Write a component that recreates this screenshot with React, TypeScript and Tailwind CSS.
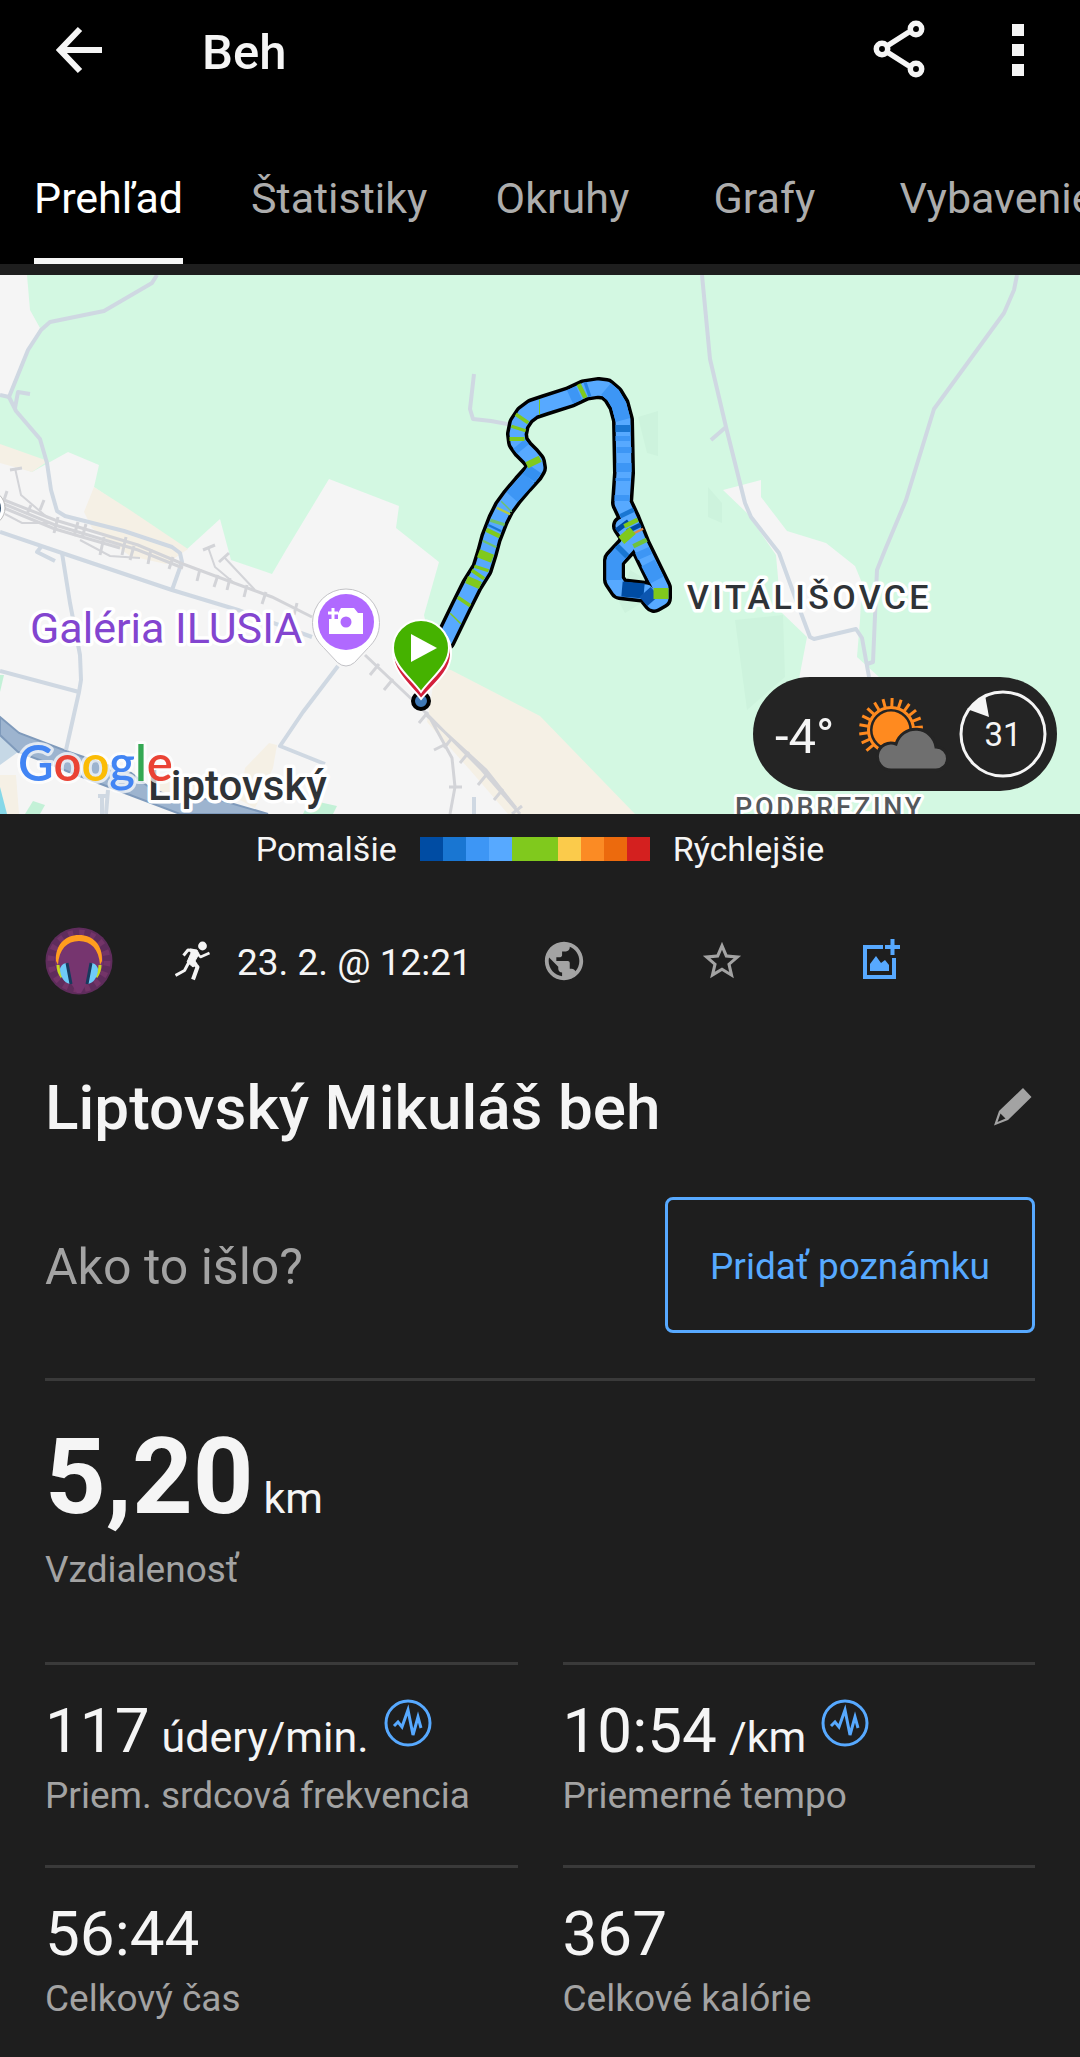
import { useState } from 'react';
import type { ReactNode } from 'react';
import { clsx } from 'clsx';
import { MdPublic, MdStarBorder } from 'react-icons/md';

const TABS = ['Prehľad', 'Štatistiky', 'Okruhy', 'Grafy', 'Vybavenie'] as const;

const PACE_COLORS = [
  'bg-[#004ca3]',
  'bg-[#1976d2]',
  'bg-[#3d96f5]',
  'bg-[#57a9ff]',
  'bg-[#80c91d]',
  'bg-[#80c91d]',
  'bg-[#fbcb4b]',
  'bg-[#fb8b24]',
  'bg-[#ec6a0d]',
  'bg-[#d4201f]',
];

interface Stat {
  value: string;
  unit?: string;
  label: string;
  chart?: boolean;
}

const STATS: Stat[] = [
  { value: '117', unit: 'údery/min.', label: 'Priem. srdcová frekvencia', chart: true },
  { value: '10:54', unit: '/km', label: 'Priemerné tempo', chart: true },
  { value: '56:44', label: 'Celkový čas' },
  { value: '367', label: 'Celkové kalórie' },
];

const ROUTE =
  'M445 640 L461 607 L472 585 L482 569 L487 553 L491 538 L498 520 L504 508 L512 497 L523 484 L533 473 L536 468 L535 462 L530 456 L523 449 L518 442 L517 434 L519 424 L525 415 L533 409 L545 405 L570 397 L585 390 L598 388 L606 389 L613 395 L619 405 L623 420 L624 473 L622 503 L630 520 L640 545 L661 588 L661 598 L654 602 L646 592 L620 589 L614 580 L614 560 L627 546 L631 538 L623 526';

// Stretches of the route whose pace differs from the base colour.
const PACE_SEGMENTS = [
  { d: 'M512 497 L529 478', color: '#3d96f5' },
  { d: 'M529 478 L535 469', color: '#3590f0' },
  { d: 'M523 449 L519 444', color: '#3d96f5' },
  { d: 'M570 397 L579 393', color: '#3d96f5' },
  { d: 'M586 390 L589 389', color: '#2a84e4' },
  { d: 'M606 389 L613 395 L619 405 L623 420', color: '#3d96f5' },
  { d: 'M623 425 V432', color: '#1976d2' },
  { d: 'M623 436 V441', color: '#3d96f5' },
  { d: 'M624 447 V453', color: '#3d96f5' },
  { d: 'M624 463 V472', color: '#3d96f5' },
  { d: 'M623 478 V481', color: '#3d96f5' },
  { d: 'M622 495 V501', color: '#3d96f5' },
  { d: 'M626 511 L628 515', color: '#1976d2' },
  { d: 'M642 550 L645 557', color: '#3d96f5' },
  { d: 'M648 563 L657 580', color: '#3d96f5' },
  { d: 'M622 551 L614 561 V580', color: '#3d96f5' },
  { d: 'M624 549 L620 553', color: '#1976d2' },
  { d: 'M622 589 L644 591', color: '#004ca3' },
  { d: 'M645 592 L653 601', color: '#0c56b0' },
  { d: 'M621 524 L624 528', color: '#004ca3' },
  { d: 'M633 526 L635 530', color: '#004ca3' },
  { d: 'M636 531 L637 533', color: '#e0884a' },
  { d: 'M630 521 L632 525', color: '#80c91d' },
  { d: 'M624 532 L630 539', color: '#80c91d' },
  { d: 'M639 541 L641 545', color: '#6fc23c' },
  { d: 'M661 588 V599', color: '#80c91d' },
  { d: 'M580 392 L584 390', color: '#80c91d' },
  { d: 'M539 407 L540 407', color: '#80c91d' },
  { d: 'M521 420 L523 417', color: '#80c91d' },
  { d: 'M518 430 L519 427', color: '#80c91d' },
  { d: 'M517 441 V437', color: '#80c91d' },
  { d: 'M535 465 L532 459', color: '#80c91d' },
  { d: 'M506 507 L507 506', color: '#6fc26b' },
  { d: 'M503 512 L504 510', color: '#b5cc3c' },
  { d: 'M497 524 L498 521', color: '#6fc26b' },
  { d: 'M494 529 L495 527', color: '#1976d2' },
  { d: 'M492 535 L494 531', color: '#80c91d' },
  { d: 'M489 545 L490 543', color: '#6fc26b' },
  { d: 'M484 560 L487 552', color: '#80c91d' },
  { d: 'M481 570 L482 567', color: '#80c91d' },
  { d: 'M477 576 L479 573', color: '#80c91d' },
  { d: 'M472 586 L475 579', color: '#80c91d' },
  { d: 'M463 603 L465 600', color: '#80c91d' },
  { d: 'M455 619 L456 618', color: '#80c91d' },
];

const SUN_RAYS = Array.from({ length: 16 }, (_, i) => -220 + i * 16.5).filter((a) => a < 0);

function BackIcon() {
  return (
    <svg className="h-12 w-12" viewBox="0 0 48 48" fill="none" stroke="currentColor" strokeWidth="6">
      <path d="M46 24H5M24 3L4 24l20 21" />
    </svg>
  );
}

function ShareIcon() {
  return (
    <svg className="h-15 w-13" viewBox="0 0 52 60" fill="none" stroke="currentColor" strokeWidth="5.5">
      <path d="M14 26l22-14M14 32l22 14" />
      <circle cx="9" cy="29" r="5.700" />
      <circle cx="43" cy="9" r="5.700" />
      <circle cx="43" cy="49" r="5.700" />
    </svg>
  );
}

function MoreIcon() {
  return (
    <svg className="h-13 w-3" viewBox="0 0 12 52" fill="currentColor">
      <path d="M0 0h12v12H0zM0 20h12v12H0zM0 40h12v12H0z" />
    </svg>
  );
}

function Avatar() {
  return (
    <svg className="h-[68px] w-[68px] shrink-0" viewBox="0 0 68 68" role="img" aria-label="Profil">
      <circle cx="34" cy="34" r="33.500" fill="#5f2c5c" />
      <circle cx="34" cy="34" r="28" fill="none" stroke="#733468" strokeWidth="7" strokeDasharray="5 6" />
      <circle cx="34" cy="34" r="24" fill="#76356f" />
      <path d="M24 53h20l-8 13h-4z" fill="#76356f" />
      <path d="M13 38c0 5 1 8 4 12M55 38c0 5-1 8-4 12" fill="none" stroke="#c6dc1f" strokeWidth="3" />
      <path d="M11 34C10 18 20 8 34 8s24 10 23 26l-2 4C54 22 46 14 34 14S14 22 13 38z" fill="#ff9d1e" />
      <path d="M15 42c1-4 4-6 7-6l3 21c-6-1-10-8-10-15zM53 42c-1-4-4-6-7-6l-3 21c6-1 10-8 10-15z" fill="#6fcbf8" />
      <path d="M22 36l4 21M46 36l-4 21" stroke="#173a5e" strokeWidth="3" />
    </svg>
  );
}

function RunnerIcon() {
  return (
    <svg className="h-10 w-9" viewBox="0 0 36 40" fill="none" stroke="currentColor" strokeLinejoin="round">
      <circle cx="27.5" cy="5" r="4.4" fill="currentColor" stroke="none" />
      <path d="M15 8L22 9L24 13L20 20L22 23L18 26L12 21L16 12z" fill="currentColor" strokeWidth="1" />
      <path d="M8.5 14.5L13 9L19 9.500" strokeWidth="3" />
      <path d="M21 11L25.500 16L34.500 12" strokeWidth="2.600" />
      <path d="M14 21L9.500 29.500L0.500 34.500" strokeWidth="3" />
      <path d="M19 22L22.500 26L18 38.500" strokeWidth="4" />
    </svg>
  );
}

function AddImageIcon() {
  return (
    <svg className="h-[46px] w-[46px]" viewBox="0 0 46 46" fill="none" stroke="currentColor" strokeWidth="4">
      <path d="M26 9H8v30h29V20M35.500 1v16M28 9h15" />
      <path d="M13 33v-7l6-8 5 7 4-3 4 5v6z" fill="currentColor" stroke="none" />
    </svg>
  );
}

function PencilIcon() {
  return (
    <svg className="h-10 w-10" viewBox="0 0 40 40" fill="currentColor">
      <path
        fillRule="evenodd"
        d="M30 0l8.500 9L15 32 1 37.500 6 23zM7.500 25.500L4.500 34l8-3.500z"
      />
    </svg>
  );
}

function PulseIcon() {
  return (
    <svg className="h-12 w-12" viewBox="0 0 48 48" fill="none" stroke="currentColor">
      <circle cx="24" cy="24" r="22" strokeWidth="3" />
      <path d="M10 27l4-4 4 5 6-17 5 25 5-18 3 11" strokeWidth="3" />
    </svg>
  );
}

function WeatherBadge() {
  return (
    <div className="absolute right-[23px] bottom-[23px] flex h-[114px] items-center rounded-full bg-[#242424] pr-[9px] pl-[22px]">
      <span className="w-[83px] pt-1.5 text-[49px]">-4°</span>
      <svg className="mr-[10px] h-[76px] w-[90px]" viewBox="858 697 90 76">
        <g stroke="#ff8a1f" strokeWidth="3">
          {SUN_RAYS.map((angle) => (
            <path key={angle} d="M914 731h9" transform={`rotate(${angle} 891 731)`} />
          ))}
          <circle cx="891" cy="731" r="22.500" fill="none" />
        </g>
        <circle cx="891" cy="731" r="18.500" fill="#ff8a1f" />
        <path
          d="M891 771a13.500 13.500 0 1 1 5-26a20.500 20.500 0 0 1 40 3a11.500 11.500 0 0 1 0 23z"
          fill="#6f6f6f"
          stroke="#242424"
          strokeWidth="3"
        />
      </svg>
      <div className="relative flex h-[90px] w-[90px] items-center justify-center pt-0.5 text-[33px]">
        <svg className="absolute inset-0" viewBox="0 0 90 90">
          <circle cx="45" cy="45" r="42" fill="none" stroke="#f5f5f5" strokeWidth="3" />
          <path d="M9 20L27 6l4 22z" fill="#f5f5f5" />
        </svg>
        31
      </div>
    </div>
  );
}

function RouteMap() {
  return (
    <section className="relative h-[539px] overflow-hidden" aria-label="Mapa trasy">
      <svg className="h-full w-full" viewBox="0 275 1080 539" preserveAspectRatio="xMidYMid slice">
        <path d="M0 275h1080v539H0z" fill="#d3f8e2" />

        {/* built-up land */}
        <g fill="#f5f5f5">
          <path d="M0 275H27L30 310L40 328L27 352L9 397L0 395z" />
          <path d="M0 460L32 472L68 452L99 465L94 487L186 550L220 519L231 560L272 574L286 550L329 479L399 506L396 528L439 562L424 615L436 670L520 814H0z" />
          <path d="M723 490L761 480V497L787 531L826 543L855 566L862 583L860 620L857 657L879 677L880 700H795L807 637L781 612L776 555L747 513z" />
        </g>
        <g fill="#cdf3dd">
          <path d="M735 620L783 615L785 677L747 710z" />
          <path d="M638 417L658 411V456L647 453z" />
          <path d="M708 487L722 503V523L708 517z" />
          <path d="M619 602L630 570L650 582L640 604L625 613z" />
        </g>
        <g fill="#f5f0e5">
          <path d="M0 444L48 461L32 472L0 463z" />
          <path d="M94 487L130 510L188 549L166 564L130 556L92 528L84 512z" />
          <path d="M436 668L451 670L540 716L635 814H508L470 770L427 722z" />
          <path d="M269 743L277 745L273 768L255 808L240 800L245 768z" />
          <path d="M0 775H16L19 814H0z" />
          <path d="M160 780h45l-5 12h-40z" />
        </g>
        <g fill="#c3f1d7">
          <path d="M0 675H4L0 692z" />
          <path d="M33 801L45 805L40 814H25z" />
          <path d="M310 800L337 806L333 814H303z" />
        </g>

        {/* water */}
        <path d="M0 733L12 740L18 752L0 765z" fill="#c6d8e6" />
        <path d="M0 787L7 814H0z" fill="#86d8e8" />
        <path
          d="M0 717L19 733L69 752L131 773L150 788L172 797L220 800L268 814H180L130 795L69 772L45 762L18 752L0 735z"
          fill="#9db4cf"
          stroke="#7f9abb"
          strokeWidth="2"
        />

        {/* roads */}
        <g fill="none" stroke="#cfd8e2" strokeWidth="4" strokeLinejoin="round">
          <path d="M157 275L152 283L104 311L50 322L41 330L28 350L9 397L16 411L40 439L47 463L51 490L57 511L65 516L124 531L172 547L180 553L182 562L172 590" />
          <path d="M0 395L9 397M15 408L18 392L30 394" />
          <path d="M0 532L62 553L172 590L238 610L312 637" />
          <path d="M41 547L37 552L55 561M62 553L70 603L80 655L81 680L79 692L66 750M0 671L79 692" />
          <path d="M338 666L303 712L280 746L325 764M474 797V814" />
          <path d="M474 374L470 409L473 419L491 421L513 425" />
          <path d="M108 790L106 814M102 796V814M98 796H108" />
          <path d="M702 275L710 359L726 427L745 503L751 517L779 553L795 597L810 637L814 639L856 629L862 638L869 677M726 427L711 440" />
          <path d="M1017 275L1014 290L1004 313L934 409L906 500L885 550L877 570L873 662L867 664" />
        </g>

        {/* railway */}
        <g fill="none" stroke="#d3d4d8" strokeWidth="2">
          <path d="M4 500L55 520L138 545L183 564L272 597L312 617M4 504L55 525L138 550L183 568M4 508L55 529L120 548" strokeWidth="3" />
          <path d="M15 468L21 495L48 518M208 547L215 567L234 583M224 557L255 590M5 514L22 523H50M80 540L110 556L140 558" />
          <path d="M365 655L420 707L482 770L520 814M425 714L486 770L516 808M430 718L452 758L455 787L450 814" strokeWidth="3" />
          <path
            d="M10 470l12-2M4 500l3-9M27 514l4-9M40 510l4-10M54 533l4-16M74 536l4-14M82 538l4-14M100 555l4-18M122 555l4-18M130 560l4-14M148 564l3-15M169 569l4-12M197 581l3-12M214 587l4-12M227 590l3-12M244 597l3-12M262 604l4-12M294 615l3-12M203 550l12-5M219 562l10-9M370 675l9-11M384 690l9-11M419 723l9-11M444 748l8-10M460 763l9-11M478 785l9-11M494 800l9-11M512 814l10-8M434 750l12-6M449 787h13"
            strokeWidth="3"
          />
        </g>

        {/* neighbouring marker cut by the edge */}
        <circle cx="-13" cy="508" r="18" fill="#fff" stroke="#bbb" strokeWidth="1" />
        <circle cx="-13" cy="508" r="14" fill="#35516d" />

        {/* place names */}
        <g fontFamily="Roboto, sans-serif" stroke="#fff" strokeLinejoin="round" paintOrder="stroke">
          <text x="30" y="643" fontSize="43" fill="#8345d0" strokeWidth="7">Galéria ILUSIA</text>
          <text x="148" y="800" fontSize="42" fontWeight="500" fill="#2f3337" strokeWidth="7">Liptovský</text>
          <text className="tracking-widest" x="687" y="609" fontSize="34" fontWeight="500" fill="#2f3337" strokeWidth="7">VITÁLIŠOVCE</text>
          <text className="tracking-widest" x="735" y="817" fontSize="27" fontWeight="500" fill="#55585c" strokeWidth="6">PODBREZINY</text>
        </g>
        <text
          x="18"
          y="781"
          fontFamily="Lato, sans-serif"
          fontSize="49"
          fontWeight="600"
          stroke="#fff"
          strokeOpacity="0.7"
          strokeWidth="6"
          strokeLinejoin="round"
          paintOrder="stroke"
        >
          <tspan fill="#4285f4">G</tspan>
          <tspan fill="#ea4335">o</tspan>
          <tspan fill="#fbbc05">o</tspan>
          <tspan fill="#4285f4">g</tspan>
          <tspan fill="#34a853">l</tspan>
          <tspan fill="#ea4335">e</tspan>
        </text>

        {/* route */}
        <g fill="none" strokeLinejoin="round">
          <path d={ROUTE} stroke="#000" strokeWidth="22" strokeLinecap="round" />
          <path d={ROUTE} stroke="#57a9ff" strokeWidth="15" strokeLinecap="round" />
          {PACE_SEGMENTS.map(({ d, color }) => (
            <path key={d} d={d} stroke={color} strokeWidth="15" />
          ))}
        </g>

        {/* gallery pin */}
        <path
          d="M346 589a33.500 33.500 0 0 1 33.500 33.500c0 12-5 19-11 25l-14 15q-8.500 7-17 0l-14-15c-6-6-11-13-11-25a33.500 33.500 0 0 1 33.500-33.500z"
          fill="#fff"
          stroke="#c2c2c6"
          strokeWidth="1"
        />
        <circle cx="346" cy="622" r="28" fill="#b069ff" />
        <path d="M338 613l3-5h13l4 5h5v21h-34v-15h9z" fill="#fff" />
        <circle cx="346" cy="622" r="5.500" fill="#b069ff" />
        <path d="M333 608v11M328 613h10" stroke="#fff" strokeWidth="3" />

        {/* finish and start pins */}
        <circle cx="421" cy="701" r="8" fill="#3f78b5" stroke="#000" strokeWidth="4" />
        <path
          d="M422 624a28 28 0 0 1 29 30c0 18-19 32-30 45c-10-13-28-27-28-45a28 28 0 0 1 29-30z"
          fill="#d3203c"
          stroke="#fff"
          strokeWidth="2"
        />
        <path
          d="M421 620a28 28 0 0 1 28 28c0 18-18 30-28 44c-10-14-28-26-28-44a28 28 0 0 1 28-28z"
          fill="#45b200"
          stroke="#fff"
          strokeWidth="2"
        />
        <path d="M411 634L437 648L411 662z" fill="#fff" />
      </svg>
      <WeatherBadge />
    </section>
  );
}

function IconButton({ label, className, children }: { label: string; className?: string; children: ReactNode }) {
  return (
    <button type="button" aria-label={label} className={clsx('shrink-0', className)}>
      {children}
    </button>
  );
}

function StatCell({ value, unit, label, chart }: Stat) {
  return (
    <div className="flex flex-col border-t-3 border-[#3a3a3a] pt-[30px] pb-[47px]">
      <dt className="order-2 mt-[7px] text-[37px] leading-[44px] text-[#a3a3a3]">{label}</dt>
      <dd className="flex items-baseline text-[62px] leading-[72px]">
        {value}
        {unit && <span className="ml-3 text-[43px] leading-none">{unit}</span>}
        {chart && (
          <IconButton label={`Graf: ${label}`} className="mt-1 ml-[15px] h-12 self-start text-[#57a9ff]">
            <PulseIcon />
          </IconButton>
        )}
      </dd>
    </div>
  );
}

export default function App() {
  const [activeTab, setActiveTab] = useState<string>('Prehľad');

  return (
    <div className="min-h-screen overflow-hidden bg-[#1e1e1e] font-[Roboto,sans-serif] text-[#f5f5f5]">
      <header className="bg-black">
        <div className="flex h-[136px] items-center pr-14 pb-9 pl-14">
          <IconButton label="Späť">
            <BackIcon />
          </IconButton>
          <h1 className="ml-[98px] flex-1 pt-1.5 text-[49px] font-medium">Beh</h1>
          <IconButton label="Zdieľať">
            <ShareIcon />
          </IconButton>
          <IconButton label="Viac" className="ml-[87px]">
            <MoreIcon />
          </IconButton>
        </div>
        <nav className="flex overflow-hidden">
          {TABS.map((tab) => (
            <button
              key={tab}
              type="button"
              onClick={() => setActiveTab(tab)}
              className={clsx(
                'flex min-w-[202px] shrink-0 justify-center px-[34px] text-[43px]',
                tab === activeTab ? 'text-white' : 'text-[#adadad]'
              )}
            >
              <span
                className={clsx(
                  'flex h-32 items-center border-b-6 pt-0.5',
                  tab === activeTab ? 'border-[#f5f5f5]' : 'border-transparent'
                )}
              >
                {tab}
              </span>
            </button>
          ))}
        </nav>
      </header>

      <main className="pt-[11px]">
        <RouteMap />

        <div className="flex h-[70px] items-center justify-center gap-[23px] text-[34px]">
          <span>Pomalšie</span>
          <div className="flex">
            {PACE_COLORS.map((color, idx) => (
              <span key={idx} className={clsx('h-6 w-[23px]', color)} />
            ))}
          </div>
          <span>Rýchlejšie</span>
        </div>

        <div className="px-[45px]">
          <div className="mt-[43px] flex h-[68px] items-center">
            <Avatar />
            <div className="ml-[62px] flex w-[366px] items-center gap-[26px] text-[37px] whitespace-nowrap">
              <RunnerIcon />
              <time className="pt-1">23. 2. @ 12:21</time>
            </div>
            <div className="flex gap-28 text-[#a3a3a3]">
              <IconButton label="Súkromie">
                <MdPublic className="h-[46px] w-[46px]" />
              </IconButton>
              <IconButton label="Obľúbené">
                <MdStarBorder className="h-[46px] w-[46px]" />
              </IconButton>
              <IconButton label="Pridať fotografiu" className="text-[#57a9ff]">
                <AddImageIcon />
              </IconButton>
            </div>
          </div>

          <div className="mt-[77px] flex items-center justify-between">
            <h2 className="text-[62px] leading-[72px] font-medium">Liptovský Mikuláš beh</h2>
            <IconButton label="Upraviť názov" className="mr-0.5 text-[#a3a3a3]">
              <PencilIcon />
            </IconButton>
          </div>

          <div className="mt-[53px] flex items-center justify-between border-b-3 border-[#3a3a3a] pb-[45px]">
            <p className="pt-1 text-[50px] text-[#a3a3a3]">Ako to išlo?</p>
            <button
              type="button"
              className="h-[136px] rounded-lg border-3 border-[#57a9ff] px-[42px] pt-1 text-[37px] text-[#57a9ff]"
            >
              Pridať poznámku
            </button>
          </div>

          <dl>
            <div className="flex flex-col pt-[34px] pb-[70px]">
              <dt className="order-2 mt-[9px] text-[37px] leading-[44px] text-[#a3a3a3]">Vzdialenosť</dt>
              <dd className="flex items-baseline text-[106px] leading-[124px] font-bold">
                5,20
                <span className="ml-[10px] text-[43px] leading-none font-normal">km</span>
              </dd>
            </div>
            <div className="grid grid-cols-2 gap-x-[45px]">
              {STATS.map((stat) => (
                <StatCell key={stat.label} {...stat} />
              ))}
            </div>
          </dl>
        </div>
      </main>
    </div>
  );
}
